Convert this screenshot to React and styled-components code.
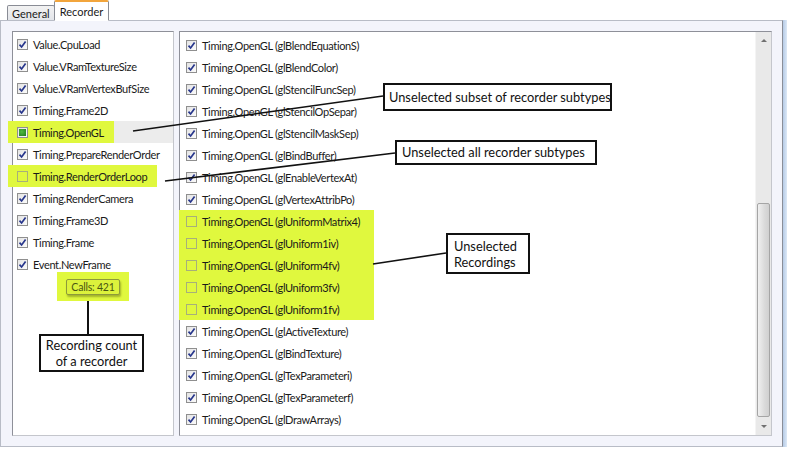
import React from 'react';
import styled, { createGlobalStyle } from 'styled-components';

const GlobalStyle = createGlobalStyle`
  html, body {
    margin: 0;
    padding: 0;
    background: #ffffff;
  }
`;

const YELLOW = '#e0f83e';

const Window = styled.div`
  position: relative;
  width: 789px;
  height: 449px;
  overflow: hidden;
  background: #ffffff;
  font-family: Lato, 'Open Sans', sans-serif;
  display: flex;
  flex-direction: column;
`;

const TabStrip = styled.div`
  display: flex;
  align-items: flex-end;
  height: 20px;
  padding-left: 7px;
  position: relative;
  z-index: 2;
`;

const Tab = styled.div`
  box-sizing: border-box;
  height: ${(p) => (p.$active ? '21px' : '15px')};
  margin-bottom: ${(p) => (p.$active ? '-1px' : '0')};
  padding: ${(p) => (p.$active ? '1px 5px 0 5px' : '0 4px')};
  border: 1px solid #898c95;
  border-bottom: ${(p) => (p.$active ? '1px solid #ffffff' : 'none')};
  border-top: ${(p) => (p.$active ? '2px solid #f2a53c' : '1px solid #898c95')};
  border-radius: 2px 2px 0 0;
  background: ${(p) =>
    p.$active ? '#ffffff' : 'linear-gradient(#f2f2f2, #e3e5ea)'};
  font-size: 11px;
  color: #1a1a1a;
  display: flex;
  align-items: center;
  margin-left: ${(p) => (p.$active ? '-1px' : '0')};
`;

const Body = styled.div`
  display: flex;
  flex: 1;
`;

const Panel = styled.div`
  box-sizing: border-box;
  width: 783px;
  height: 427px;
  border: 1px solid #b8bcc6;
  border-right-color: #8a8e98;
  background: #f3f4fb;
  padding: 10px 10px 10px 11px;
  display: flex;
  gap: 5px;
`;

const Frame = styled.div`
  width: 4px;
  height: 427px;
  background: linear-gradient(90deg, #b6cbe6, #dce8f6);
`;

const ListBox = styled.div`
  box-sizing: border-box;
  width: ${(p) => p.$w}px;
  height: 405px;
  background: #ffffff;
  border: 1px solid #c4c6cc;
  border-left-color: #8e9099;
  border-top-color: #8e9099;
  display: flex;
`;

const Items = styled.div`
  flex: 1;
  padding-top: ${(p) => p.$pt}px;
`;

const Row = styled.div`
  height: 22px;
  display: flex;
  align-items: center;
  padding-left: ${(p) => p.$pl}px;
  background: ${(p) => (p.$selected ? '#ececec' : 'transparent')};
  font-size: 11px;
  letter-spacing: -0.35px;
  color: #1a1a1a;
  white-space: nowrap;
`;

const Mark = styled.span`
  height: 22px;
  display: inline-flex;
  align-items: center;
  gap: 5px;
  background: ${(p) => (p.$on ? YELLOW : 'transparent')};
  margin-left: ${(p) => (p.$on ? '-9px' : '0')};
  padding-left: ${(p) => (p.$on ? '9px' : '0')};
  padding-right: ${(p) => (p.$on ? '10px' : '0')};
`;

const Group = styled.div`
  width: ${(p) => (p.$on ? '194px' : 'auto')};
  margin-left: ${(p) => (p.$on ? '-1px' : '0')};
  padding-left: ${(p) => (p.$on ? '1px' : '0')};
  background: ${(p) => (p.$on ? YELLOW : 'transparent')};
`;

const Box = styled.span`
  box-sizing: border-box;
  width: 11px;
  height: 11px;
  border: 1px solid ${(p) => (p.$state === 'empty' ? '#a7b07a' : '#8f8f8f')};
  background: ${(p) =>
    p.$state === 'empty'
      ? 'transparent'
      : 'linear-gradient(135deg, #e4e4e4, #fbfbfb)'};
  display: inline-flex;
  align-items: center;
  justify-content: center;
  flex: none;
`;

const Partial = styled.span`
  width: 7px;
  height: 7px;
  background: radial-gradient(circle at 40% 40%, #4fbb3f, #1f7a1f);
`;

const Check = ({ state }) => (
  <Box $state={state}>
    {state === 'checked' && (
      <svg width="9" height="9" viewBox="0 0 9 9">
        <path d="M1.5 4.6 L3.6 7 L7.6 1.4" fill="none" stroke="#27368c" strokeWidth="1.7" />
      </svg>
    )}
    {state === 'partial' && <Partial />}
  </Box>
);

const Scrollbar = styled.div`
  width: 15px;
  background: #e9e9e9;
  border-left: 1px solid #f4f4f4;
  display: flex;
  flex-direction: column;
  align-items: center;
`;

const Arrow = styled.div`
  height: 17px;
  display: flex;
  align-items: center;
  justify-content: center;
  &::after {
    content: '';
    border-left: 3px solid transparent;
    border-right: 3px solid transparent;
    ${(p) => (p.$up ? 'border-bottom' : 'border-top')}: 3px solid #707070;
  }
`;

const Track = styled.div`
  flex: 1;
  width: 100%;
  display: flex;
  flex-direction: column;
  justify-content: flex-end;
  padding-bottom: 1px;
  box-sizing: border-box;
`;

const Thumb = styled.div`
  box-sizing: border-box;
  height: 214px;
  margin: 0 1px;
  border: 1px solid #a5a5a5;
  border-radius: 2px;
  background: linear-gradient(90deg, #f0f0f0, #dadada 60%, #d0d0d0);
`;

const Overlay = styled.svg`
  position: absolute;
  left: 0;
  top: 0;
  pointer-events: none;
  z-index: 3;
`;

const Callout = styled.div`
  position: absolute;
  z-index: 4;
  box-sizing: border-box;
  background: #ffffff;
  border: 2px solid #111111;
  font-family: Lato, 'Liberation Sans', sans-serif;
  font-size: 12.8px;
  line-height: 16px;
  color: #111;
  white-space: nowrap;
  padding: ${(p) => p.$pad || '2px 4px'};
  text-align: ${(p) => p.$align || 'left'};
`;

const Badge = styled.div`
  position: absolute;
  left: 57px;
  top: 272px;
  width: 72px;
  height: 29px;
  background: ${YELLOW};
  display: flex;
  align-items: center;
  justify-content: center;
  z-index: 4;
`;

const Tip = styled.div`
  box-sizing: border-box;
  height: 16px;
  padding: 0 4px;
  border: 1px solid #8d9a3a;
  border-radius: 2px;
  box-shadow: 1px 2px 2px rgba(90, 100, 20, 0.45);
  background: #dcf23c;
  font-size: 10.5px;
  letter-spacing: -0.2px;
  color: #4a5512;
  display: flex;
  align-items: center;
`;

const left = [
  ['Value.CpuLoad', 'checked'],
  ['Value.VRamTextureSize', 'checked'],
  ['Value.VRamVertexBufSize', 'checked'],
  ['Timing.Frame2D', 'checked'],
  ['Timing.OpenGL', 'partial', true, true],
  ['Timing.PrepareRenderOrder', 'checked'],
  ['Timing.RenderOrderLoop', 'empty', true],
  ['Timing.RenderCamera', 'checked'],
  ['Timing.Frame3D', 'checked'],
  ['Timing.Frame', 'checked'],
  ['Event.NewFrame', 'checked'],
];

const gl = (s) => `Timing.OpenGL (${s})`;
const rightTop = ['glBlendEquationS', 'glBlendColor', 'glStencilFuncSep', 'glStencilOpSepar', 'glStencilMaskSep', 'glBindBuffer', 'glEnableVertexAt', 'glVertexAttribPo'];
const rightOff = ['glUniformMatrix4', 'glUniform1iv', 'glUniform4fv', 'glUniform3fv', 'glUniform1fv'];
const rightBottom = ['glActiveTexture', 'glBindTexture', 'glTexParameteri', 'glTexParameterf', 'glDrawArrays'];

const GlRow = ({ name, state }) => (
  <Row $pl={6}>
    <Mark>
      <Check state={state} />
      {gl(name)}
    </Mark>
  </Row>
);

export default function App() {
  return (
    <>
      <GlobalStyle />
      <Window>
        <TabStrip>
          <Tab>General</Tab>
          <Tab $active>Recorder</Tab>
        </TabStrip>
        <Body>
          <Panel>
            <ListBox $w={162}>
              <Items $pt={1}>
                {left.map(([name, state, hl, sel]) => (
                  <Row key={name} $pl={4} $selected={sel}>
                    <Mark $on={hl}>
                      <Check state={state} />
                      {name}
                    </Mark>
                  </Row>
                ))}
              </Items>
            </ListBox>
            <ListBox $w={593}>
              <Items $pt={2}>
                {rightTop.map((n) => (
                  <GlRow key={n} name={n} state="checked" />
                ))}
                <Group $on>
                  {rightOff.map((n) => (
                    <GlRow key={n} name={n} state="empty" />
                  ))}
                </Group>
                {rightBottom.map((n) => (
                  <GlRow key={n} name={n} state="checked" />
                ))}
              </Items>
              <Scrollbar>
                <Arrow $up />
                <Track>
                  <Thumb />
                </Track>
                <Arrow />
              </Scrollbar>
            </ListBox>
          </Panel>
          <Frame />
        </Body>

        <Badge>
          <Tip>Calls: 421</Tip>
        </Badge>

        <Overlay width="789" height="449">
          <g stroke="#111" strokeWidth="1.6" fill="none">
            <line x1="133" y1="131" x2="383" y2="96" />
            <line x1="165" y1="181" x2="395" y2="153" />
            <line x1="373" y1="264" x2="446" y2="253" />
            <line x1="88" y1="301" x2="88" y2="335" strokeWidth="2" />
          </g>
        </Overlay>

        <Callout style={{ left: 383, top: 83, width: 229, height: 28 }} $pad="4px 4px">
          Unselected subset of recorder subtypes
        </Callout>
        <Callout style={{ left: 395, top: 140, width: 202, height: 25 }} $pad="2px 5px">
          Unselected all recorder subtypes
        </Callout>
        <Callout style={{ left: 446, top: 233, width: 84, height: 41 }} $pad="3px 6px">
          Unselected
          <br />
          Recordings
        </Callout>
        <Callout style={{ left: 39, top: 334, width: 105, height: 38 }} $pad="1px 2px" $align="center">
          Recording count
          <br />
          of a recorder
        </Callout>
      </Window>
    </>
  );
}
